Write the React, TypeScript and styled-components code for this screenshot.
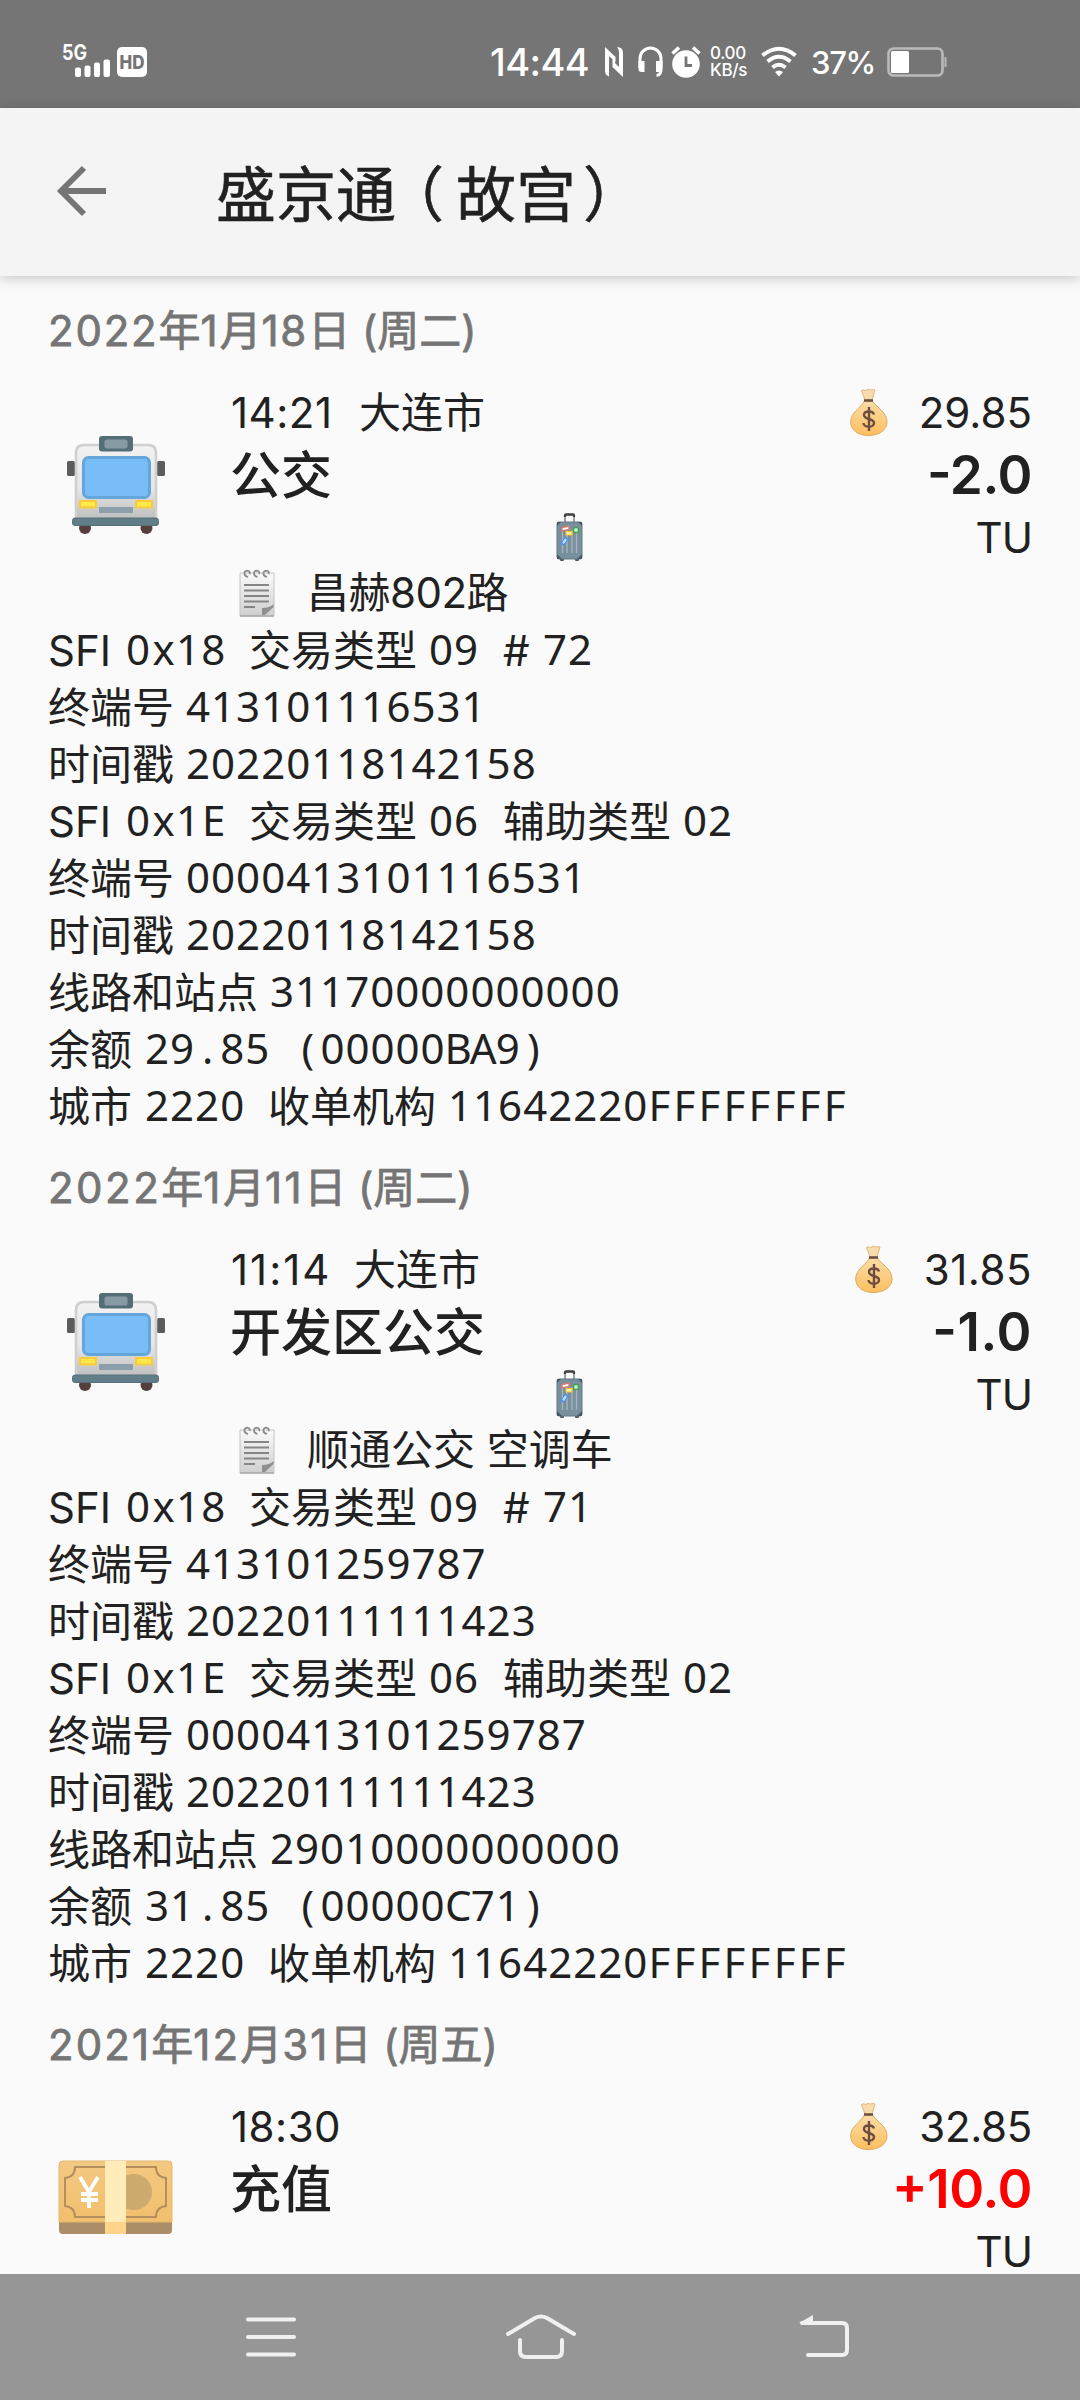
import React from "react";
import styled, { createGlobalStyle } from "styled-components";

const UI = `Inter, "Noto Sans CJK SC", sans-serif`;
const MONO = `"Noto Sans", "Noto Sans CJK SC", sans-serif`;

const Global = createGlobalStyle`
  * { box-sizing: border-box; }
  html, body { margin: 0; padding: 0; background: #fafafa; }
  body { width: 1080px; height: 2400px; overflow: hidden; }
`;

const Screen = styled.div`
  width: 1080px;
  height: 2400px;
  overflow: hidden;
  display: flex;
  flex-direction: column;
  background: #fafafa;
  color: #212121;
  font-family: ${UI};
  font-size: 42px;
  svg { display: block; flex: none; overflow: visible; }
`;

const StatusBar = styled.header`
  height: 108px;
  flex: none;
  display: flex;
  align-items: center;
  justify-content: space-between;
  padding: 16px 133px 0 62px;
  background: #757575;
  color: #fff;
`;

const StatusGroup = styled.div`
  display: flex;
  align-items: center;
`;

const Clock = styled.span`
  width: 98px;
  margin-right: 16px;
  font-size: 38px;
  line-height: 40px;
  font-weight: 500;
  letter-spacing: -0.6px;
  white-space: nowrap;
`;

const Speed = styled.div`
  display: flex;
  flex-direction: column;
  width: 38px;
  margin: 0 13px 0 9px;
  font-size: 17px;
  line-height: 17px;
  font-weight: 500;
  letter-spacing: -0.3px;
  white-space: nowrap;
`;

const Percent = styled.span`
  width: 63px;
  margin: 0 13px 0 14px;
  font-size: 31px;
  line-height: 34px;
  font-weight: 500;
  letter-spacing: -1.3px;
  white-space: nowrap;
  padding-top: 1px;
`;

const AppBar = styled.div`
  height: 168px;
  flex: none;
  display: flex;
  align-items: center;
  padding: 0 0 2px 46px;
  gap: 96px;
  background: #f4f4f4;
  box-shadow: 0 2px 12px rgba(0, 0, 0, 0.22);
  z-index: 1;
`;

const Title = styled.h1`
  margin: 0 0 0 12px;
  font-size: 60px;
  line-height: 80px;
  font-weight: 400;
  white-space: nowrap;
  font-family: "Noto Sans CJK SC", sans-serif;
  -webkit-text-stroke: 0.6px #212121;
`;

const Paren = styled.span<{ $before: number; $after: number }>`
  font-feature-settings: "halt";
  margin-left: ${(p) => p.$before}px;
  margin-right: ${(p) => p.$after}px;
`;

const List = styled.main`
  flex: 1;
  min-height: 0;
  padding: 0 48px;
`;

const Day = styled.section`
  height: 857px;
`;

const DayLabel = styled.h2`
  margin: 0;
  padding-top: 26px;
  height: 106px;
  font-size: 42px;
  line-height: 57px;
  font-weight: 400;
  color: #757575;
  -webkit-text-stroke: 0.8px #757575;
  white-space: pre;
`;

const Digits = styled.span<{ $ls: number }>`
  letter-spacing: ${(p) => p.$ls}px;
`;

const Summary = styled.div`
  display: flex;
  height: 182px;
`;

const IconSlot = styled.div<{ $x: number; $y: number }>`
  width: 182px;
  padding: ${(p) => p.$y}px 0 0 ${(p) => p.$x}px;
`;

const Middle = styled.div`
  width: 353px;
  display: flex;
  flex-direction: column;
`;

const Meta = styled.div`
  height: 60px;
  line-height: 62px;
  display: flex;
  white-space: pre;
`;

const Time = styled.span<{ $w: number; $ls: number }>`
  flex: none;
  width: ${(p) => p.$w}px;
  padding-left: 1px;
  letter-spacing: ${(p) => p.$ls}px;
`;

const Kind = styled.div`
  height: 66px;
  line-height: 68px;
  font-size: 51px;
  font-weight: 500;
  white-space: nowrap;
`;

const LuggageSlot = styled.div`
  display: flex;
  justify-content: flex-end;
  padding: 5px 0 0;
`;

const Right = styled.div`
  flex: 1;
  display: flex;
  flex-direction: column;
  align-items: flex-end;
`;

const Balance = styled.div<{ $ls: number }>`
  height: 60px;
  display: flex;
  align-items: center;
  gap: 31px;
  letter-spacing: ${(p) => p.$ls}px;
`;

const Amount = styled.div<{ $credit?: boolean; $ls: number }>`
  height: 66px;
  line-height: 67px;
  font-size: 53px;
  font-weight: 560;
  letter-spacing: ${(p) => p.$ls}px;
  font-feature-settings: "case";
  color: ${(p) => (p.$credit ? "#f00" : "#212121")};
`;

const Code = styled.div`
  height: 56px;
  line-height: 60px;
  letter-spacing: -0.9px;
`;

const Note = styled.div`
  height: 57px;
  padding-left: 191px;
  display: flex;
  align-items: center;
  gap: 32px;
  white-space: pre;
`;

const NoteText = styled.span<{ $ls: number }>`
  line-height: 58px;
  height: 57px;
  letter-spacing: ${(p) => p.$ls}px;
`;

const Line = styled.div`
  height: 57px;
  line-height: 59px;
  white-space: nowrap;
  display: flex;
`;

const Piece = styled.span<{ $w: number }>`
  flex: none;
  width: ${(p) => p.$w}px;
  white-space: pre;
`;

const Run = styled.span<{ $ls: number; $ml: number }>`
  font-family: ${MONO};
  letter-spacing: ${(p) => p.$ls}px;
  margin-left: ${(p) => p.$ml}px;
  vertical-align: 1px;
  line-height: 1;
  white-space: pre;
`;

/* Advance widths of the non-digit glyphs, in em, so that each fills one 25px cell. */
const ADVANCE: Record<string, number> = {
  F: 0.519, E: 0.556, B: 0.65, A: 0.639, C: 0.632, x: 0.529,
  ".": 0.268, "(": 0.3, ")": 0.3, " ": 0.26,
};

function Mono({ children }: { children: string }) {
  const runs = children.match(/[0-9]+|F+|./g) || [];
  return (
    <>
      {runs.map((r, i) => {
        const adv = (ADVANCE[r[0]] ?? 0.572) * 42;
        const gap = 25.05 - adv;
        const shift = /[0-9F]/.test(r[0]) ? 0 : gap / 2;
        return <Run key={i} $ls={gap - shift} $ml={shift}>{r}</Run>;
      })}
    </>
  );
}

function Bus() {
  return (
    <svg width="128" height="128" viewBox="0 0 128 128">
      <defs>
        <linearGradient id="busBody" x1="0" y1="0" x2="0" y2="1">
          <stop offset="0" stopColor="#f2f2f2" /><stop offset=".6" stopColor="#e4e4e4" /><stop offset="1" stopColor="#bdbdbd" />
        </linearGradient>
      </defs>
      <circle cx="34" cy="105" r="6" fill="#543f3c" /><circle cx="95.5" cy="105" r="6" fill="#543f3c" />
      <rect x="16" y="38" width="8" height="15" rx="1.5" fill="#5c5c5c" />
      <rect x="106" y="38" width="8" height="15" rx="1.5" fill="#5c5c5c" />
      <path d="M25 97V30q0-8 8-8h64q8 0 8 8v67z" fill="url(#busBody)" stroke="#cfcfcf" strokeWidth="2.6" />
      <rect x="21.500" y="95" width="86" height="7.500" rx="2.500" fill="#607d88" stroke="#56707a" />
      <rect x="48" y="13" width="34" height="15.500" rx="3" fill="#546e76" />
      <rect x="53.500" y="16.500" width="23" height="9" rx="2" fill="#879ba5" />
      <rect x="32.500" y="34.500" width="66" height="40" rx="5" fill="#78bdf8" stroke="#65a6da" strokeWidth="3" />
      <rect x="29" y="78" width="16" height="6.500" fill="#ffe84a" stroke="#f9cb3c" strokeWidth="2" />
      <rect x="85" y="78" width="16" height="6.500" fill="#ffe84a" stroke="#f9cb3c" strokeWidth="2" />
      <rect x="48" y="84" width="34" height="6" rx="1" fill="#8a9fa9" />
    </svg>
  );
}

function Cash() {
  return (
    <svg width="116" height="76" viewBox="0 0 116 76">
      <defs>
        <linearGradient id="cashTop" x1="0" y1="0" x2="0" y2="1">
          <stop offset="0" stopColor="#f3c982" /><stop offset="1" stopColor="#f1bf6c" />
        </linearGradient>
      </defs>
      <rect x="1" y="1" width="113" height="73" rx="4" fill="#ab8e68" />
      <path d="M5 1h105q4 0 4 4v57H1V5q0-4 4-4z" fill="url(#cashTop)" stroke="#e6b871" />
      <path d="M17 7h81q0 10 10 11v28q-10 1-10 11H17q0-10-10-11V18q10-1 10-11z" fill="none" stroke="#b28f5c" strokeWidth="2" />
      <circle cx="76" cy="32" r="18" fill="#cdaa6d" />
      <path d="M22 17l9 15 9-15M31 32v16M23 34h17M23 40h17" fill="none" stroke="#fff" strokeWidth="3.8" />
      <rect x="47" y="1" width="21" height="61" fill="#ffecb8" />
      <rect x="47" y="62" width="21" height="12" fill="#ffd38a" />
    </svg>
  );
}

function Luggage() {
  return (
    <svg width="27" height="48" viewBox="0 0 27 48">
      <path d="M9 9V2.5q0-1 1-1h7q1 0 1 1V9" fill="none" stroke="#8a8a8a" strokeWidth="1.600" />
      <path d="M9 4V2.500q0-1 1-1h7q1 0 1 1V4" fill="none" stroke="#424242" strokeWidth="2.300" />
      <rect x="4" y="44" width="4" height="4" rx="1" fill="#555" /><rect x="19" y="44" width="4" height="4" rx="1" fill="#555" />
      <rect x="1" y="9" width="25" height="37" rx="2" fill="#78909c" stroke="#607985" />
      <path d="M1 13V9h4zM26 13V9h-4zM1 41v5h5zM26 41v5h-5z" fill="#455a64" />
      <path d="M6.500 17v23M11 17v23M16 17v23M20.500 17v23" stroke="#a3b5bd" strokeWidth="1.400" />
      <path d="M6 14.500l7-1.500v3.500l-7 1.500z" fill="#fff" stroke="#e57373" strokeWidth="1.300" />
      <circle cx="20" cy="17" r="2.600" fill="#b9f6ca" stroke="#43a047" strokeWidth="1.300" />
      <rect x="10" y="18.500" width="6" height="3.500" fill="#fff59d" stroke="#fbc02d" />
      <path d="M7.200 30l2.600-3.500" stroke="#448aff" strokeWidth="4.400" strokeLinecap="round" />
      <path d="M7.500 29.500l2-2.700" stroke="#bbdefb" strokeWidth="2.400" strokeLinecap="round" />
    </svg>
  );
}

function MoneyBag() {
  return (
    <svg width="38" height="48" viewBox="0 0 38 48">
      <defs>
        <linearGradient id="bagFill" x1="0" y1="0" x2="0" y2="1">
          <stop offset="0" stopColor="#f9dca8" /><stop offset="1" stopColor="#fdbf5f" />
        </linearGradient>
      </defs>
      <path d="M15 12L11.500 2.500q2-1.500 4 0 3-2 5-.5 3-1 4.500 0L22 12z" fill="#f7dcae" stroke="#e0b87a" />
      <path d="M14.500 13h8C27 20 37 24 37 34c0 8-8 13.500-18.500 13.500S.7 42 .7 34C.7 24 11 20 14.500 13z" fill="url(#bagFill)" stroke="#dfa95a" />
      <path d="M14 12.500h9" stroke="#6d4c41" strokeWidth="2.500" />
      <path d="M24 26.500c-1-4-10-4-10 .5 0 5 10 3 10 8 0 5-10 5-10.500 0M19 19v24" fill="none" stroke="#6d4c41" strokeWidth="2.400" />
    </svg>
  );
}

function Notepad() {
  return (
    <svg width="36" height="48" viewBox="0 0 36 48">
      <defs>
        <linearGradient id="padFill" x1="0" y1="0" x2="0" y2="1">
          <stop offset="0" stopColor="#fafafa" /><stop offset="1" stopColor="#cfcfcf" />
        </linearGradient>
      </defs>
      <path d="M1 4h34v43H1z" fill="url(#padFill)" stroke="#c4c4c4" />
      <path d="M1 47h34" stroke="#a8a8a8" strokeWidth="1.500" />
      <path d="M34.500 35v3L26 46h-3v-7q8 0 11.500-4z" fill="#8f8f8f" />
      <path d="M5 16h25M5 21.500h25M5 27h25M5 32.500h25M5 38h11" stroke="#858585" strokeWidth="2" />
      <path d="M9 8q-4-1-3.500-4t4-2q2 1 1 3M18.500 8q-4-1-3.500-4t4-2q2 1 1 3M28 8q-4-1-3.500-4t4-2q2 1 1 3" fill="none" stroke="#8a8a8a" strokeWidth="1.800" />
    </svg>
  );
}

function Signal() {
  return (
    <svg width="86" height="36" viewBox="0 0 86 36">
      <text x="0" y="16" fill="#fff" fontFamily="Inter, sans-serif" fontWeight="700" fontSize="21" textLength="25" lengthAdjust="spacingAndGlyphs">5G</text>
      <g fill="#fff">
        <rect x="13" y="23.500" width="6" height="9.500" rx="2" /><rect x="22.500" y="21.500" width="6" height="11.500" rx="2" />
        <rect x="32" y="18.500" width="6" height="14.500" rx="2" /><rect x="41.500" y="15.500" width="6.500" height="17.500" rx="2" />
        <rect x="55" y="3" width="30" height="30" rx="5" />
      </g>
      <text x="57.500" y="25" fill="#757575" fontFamily="Inter, sans-serif" fontWeight="800" fontSize="19" textLength="25" lengthAdjust="spacingAndGlyphs">HD</text>
    </svg>
  );
}

function StatusIcons() {
  return (
    <svg width="97" height="32" viewBox="0 0 97 32">
      <path d="M1 1L11.500 11v5L5 10v20.500Q1 29 1 25z" fill="#fff" />
      <path d="M19 31L8.500 21v-8.500h2.500V17l4 4V6q0-3-2-5 6 0 6 6z" fill="#fff" />
      <path d="M36 22V12.500a10.500 10.500 0 0 1 21 0V22" fill="none" stroke="#fff" strokeWidth="3" />
      <g fill="#fff">
        <path d="M34.500 15h6v11h-3q-3 0-3-3zM52 15h6.500v9q0 6-6 7v-3q2.500-.5 2.500-2H52z" />
        <circle cx="82" cy="18" r="13.800" />
      </g>
      <path d="M68.500 7.500l6.500-6M95.500 7.500l-6.500-6" stroke="#fff" strokeWidth="3.600" />
      <path d="M82 10.500v9h6" fill="none" stroke="#757575" strokeWidth="2.800" />
    </svg>
  );
}

function Wifi() {
  return (
    <svg width="36" height="30" viewBox="0 0 36 30">
      <path d="M1.500 8.500Q18-5 34.500 8.500M6.500 14.500Q18 5 29.500 14.500M11.500 20.500Q18 15 24.500 20.500" fill="none" stroke="#fff" strokeWidth="4" />
      <path d="M14 25q4-3 8 0l-4 4.500z" fill="#fff" />
    </svg>
  );
}

function Battery() {
  return (
    <svg width="60" height="30" viewBox="0 0 60 30">
      <rect x="1.500" y="1.500" width="54" height="27" rx="5" fill="none" stroke="#bababa" strokeWidth="2.600" />
      <rect x="4" y="4" width="18" height="22" rx="1.500" fill="#fff" />
      <path d="M58.500 10v10" stroke="#bababa" strokeWidth="2" />
    </svg>
  );
}

const NavBar = styled.nav`
  height: 126px;
  flex: none;
  display: flex;
  align-items: center;
  background: #969696;
  padding-left: 245px;
`;

const NavItem = styled.div<{ $w: number; $gap: number }>`
  width: ${(p) => p.$w}px;
  margin-right: ${(p) => p.$gap}px;
`;

type P = [string, number, "m"?];

interface Trip {
  date: string;
  dateLs: number;
  time: string;
  timeW: number;
  timeLs: number;
  city: string;
  kind: string;
  balance: string;
  balanceLs: number;
  amount: string;
  amountLs: number;
  note?: string;
  noteLs?: number;
  lines?: P[][];
}

const details = (seq: string, term: string, stamp: string, route: string, bal: string): P[][] => [
  [["SFI", 78], ["0x18", 123, "m"], ["交易类型", 180], ["09", 74, "m"], ["#", 40], [seq, 60, "m"]],
  [["终端号", 138], [term, 400, "m"]],
  [["时间戳", 138], [stamp, 400, "m"]],
  [["SFI", 78], ["0x1E", 123, "m"], ["交易类型", 180], ["06", 74, "m"], ["辅助类型", 180], ["02", 60, "m"]],
  [["终端号", 138], ["0000" + term, 420, "m"]],
  [["时间戳", 138], [stamp, 400, "m"]],
  [["线路和站点", 222], [route, 400, "m"]],
  [["余额", 97], [bal, 500, "m"]],
  [["城市", 97], ["2220", 123, "m"], ["收单机构", 180], ["11642220FFFFFFFF", 420, "m"]],
];

const trips: Trip[] = [
  {
    date: "2022年1月18日 (周二)", dateLs: 1.8, time: "14:21", timeW: 129, timeLs: 0.5, city: "大连市", kind: "公交",
    balance: "29.85", balanceLs: 0, amount: "-2.0", amountLs: -0.4, note: "昌赫802路", noteLs: -0.5,
    lines: details("72", "413101116531", "20220118142158", "31170000000000", "29.85 (00000BA9)"),
  },
  {
    date: "2022年1月11日 (周二)", dateLs: 2.5, time: "11:14", timeW: 124, timeLs: 2, city: "大连市", kind: "开发区公交",
    balance: "31.85", balanceLs: 0.5, amount: "-1.0", amountLs: 0.6, note: "顺通公交 空调车", noteLs: 0,
    lines: details("71", "413101259787", "20220111111423", "29010000000000", "31.85 (00000C71)"),
  },
  {
    date: "2021年12月31日 (周五)", dateLs: 2.1, time: "18:30", timeW: 128, timeLs: 0.5, city: "", kind: "充值",
    balance: "32.85", balanceLs: -0.3, amount: "+10.0", amountLs: -0.4,
  },
];

export default function App() {
  return (
    <>
      <Global />
      <Screen>
        <StatusBar>
          <Signal />
          <StatusGroup>
            <Clock>14:44</Clock>
            <StatusIcons />
            <Speed><span>0.00</span><span>KB/s</span></Speed>
            <Wifi />
            <Percent>37%</Percent>
            <Battery />
          </StatusGroup>
        </StatusBar>
        <AppBar>
          <svg width="62" height="52" viewBox="0 0 62 52">
            <path d="M60 26H16M38 3L15 26l23 23" fill="none" stroke="#757575" strokeWidth="5.800" />
          </svg>
          <Title>
            盛京通<Paren $before={18} $after={12}>（</Paren>故宫<Paren $before={7} $after={0}>）</Paren>
          </Title>
        </AppBar>
        <List>
          {trips.map((t) => (
            <Day key={t.date}>
              <DayLabel>
                {(t.date.match(/\d+|\D+/g) || []).map((s, i) =>
                  /\d/.test(s) ? <Digits key={i} $ls={t.dateLs}>{s}</Digits> : s
                )}
              </DayLabel>
              <Summary>
                {t.city
                  ? <IconSlot $x={3} $y={41}><Bus /></IconSlot>
                  : <IconSlot $x={10} $y={64}><Cash /></IconSlot>}
                <Middle>
                  <Meta><Time $w={t.timeW} $ls={t.timeLs}>{t.time}</Time><span>{t.city}</span></Meta>
                  <Kind>{t.kind}</Kind>
                  {t.city && <LuggageSlot><Luggage /></LuggageSlot>}
                </Middle>
                <Right>
                  <Balance $ls={t.balanceLs}><MoneyBag /><span>{t.balance}</span></Balance>
                  <Amount $credit={t.amount[0] === "+"} $ls={t.amountLs}>{t.amount}</Amount>
                  <Code>TU</Code>
                </Right>
              </Summary>
              {t.note && <Note><Notepad /><NoteText $ls={t.noteLs ?? 0}>{t.note}</NoteText></Note>}
              {t.lines?.map((l, i) => (
                <Line key={i}>
                  {l.map(([s, w, k], j) => (
                    <Piece key={j} $w={w}>{k === "m" ? <Mono>{s}</Mono> : s}</Piece>
                  ))}
                </Line>
              ))}
            </Day>
          ))}
        </List>
        <NavBar>
          <NavItem $w={52} $gap={208}>
            <svg width="52" height="44" viewBox="0 0 52 44">
              <path d="M3 4.500h46M3 22h46M3 39.500h46" stroke="#f0f0f0" strokeWidth="4" strokeLinecap="round" />
            </svg>
          </NavItem>
          <NavItem $w={72} $gap={221}>
            <svg width="72" height="46" viewBox="0 0 72 46">
              <path d="M3 20L30 4q6-3 12 0L69 20M15 26v11q0 6 6 6h30q6 0 6-6V26" fill="none" stroke="#f0f0f0" strokeWidth="4" strokeLinecap="round" />
            </svg>
          </NavItem>
          <NavItem $w={52} $gap={0}>
            <svg width="52" height="44" viewBox="0 0 52 44">
              <path d="M4 8h40q5 0 5 5v22q0 5-5 5H10" fill="none" stroke="#f0f0f0" strokeWidth="4" strokeLinecap="round" />
              <path d="M1 8L15 0v8z" fill="#f0f0f0" />
            </svg>
          </NavItem>
        </NavBar>
      </Screen>
    </>
  );
}
